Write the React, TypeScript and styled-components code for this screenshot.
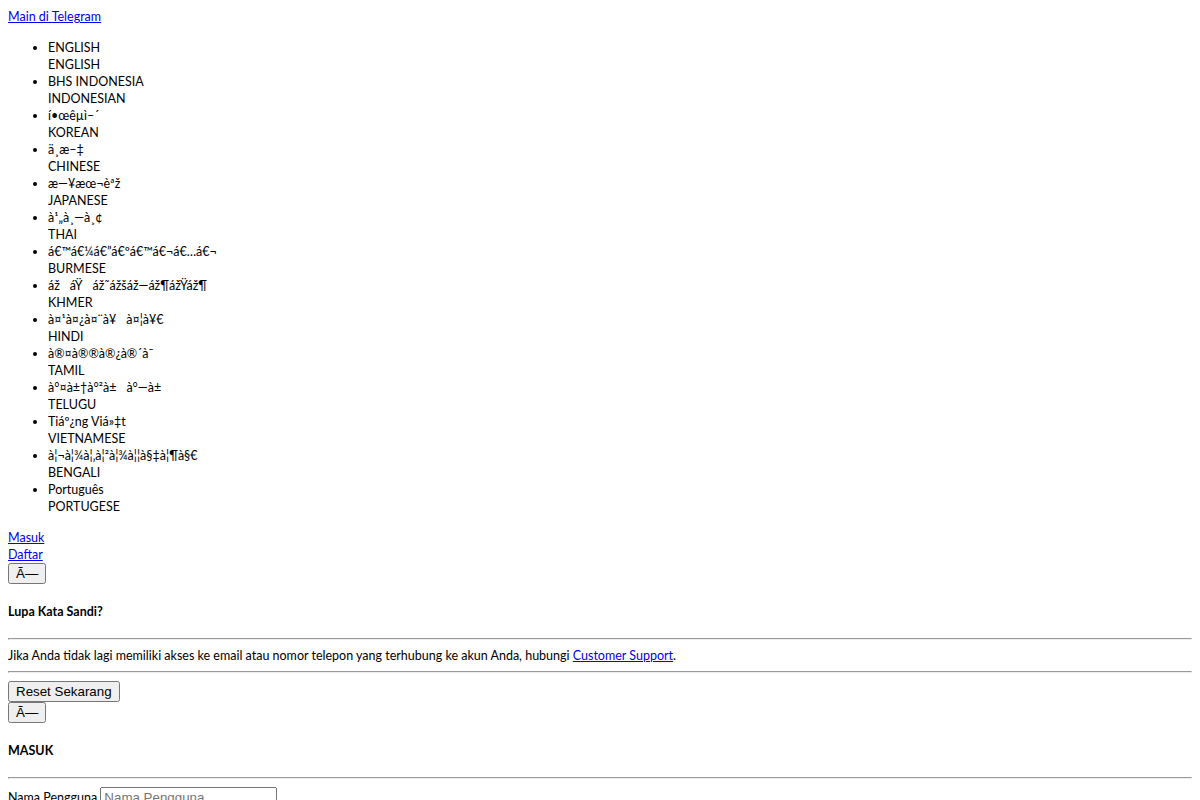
import React from "react";
import styled, { createGlobalStyle } from "styled-components";

const GlobalStyle = createGlobalStyle`
  body {
    margin: 8px;
    font-family: Lato, "Liberation Sans", Arial, sans-serif;
    font-size: 12.5px;
    line-height: 17px;
    color: #000;
    background: #fff;
  }
`;

const CP1252: Record<number, number> = {
  0x80: 0x20ac, 0x82: 0x201a, 0x83: 0x0192, 0x84: 0x201e, 0x85: 0x2026,
  0x86: 0x2020, 0x87: 0x2021, 0x88: 0x02c6, 0x89: 0x2030, 0x8a: 0x0160,
  0x8b: 0x2039, 0x8c: 0x0152, 0x8e: 0x017d, 0x91: 0x2018, 0x92: 0x2019,
  0x93: 0x201c, 0x94: 0x201d, 0x95: 0x2022, 0x96: 0x2013, 0x97: 0x2014,
  0x98: 0x02dc, 0x99: 0x2122, 0x9a: 0x0161, 0x9b: 0x203a, 0x9c: 0x0153,
  0x9e: 0x017e, 0x9f: 0x0178,
};

// The page was decoded as windows-1252: rebuild that text from the original strings.
function mojibake(s: string): string {
  const bytes = new TextEncoder().encode(s);
  let out = "";
  bytes.forEach((b) => {
    out += String.fromCharCode(CP1252[b] ?? b);
  });
  return out;
}

const LANGUAGES: [string, string][] = [
  ["ENGLISH", "ENGLISH"],
  ["BHS INDONESIA", "INDONESIAN"],
  [mojibake("한국어"), "KOREAN"],
  [mojibake("中文"), "CHINESE"],
  [mojibake("日本語"), "JAPANESE"],
  [mojibake("ไทย"), "THAI"],
  [mojibake("မြန်မာစာ"), "BURMESE"],
  [mojibake("ខេមរភាសា"), "KHMER"],
  [mojibake("हिन्दी"), "HINDI"],
  [mojibake("தமிழ்"), "TAMIL"],
  [mojibake("తెలుగు"), "TELUGU"],
  [mojibake("Tiếng Việt"), "VIETNAMESE"],
  [mojibake("বাংলাদেশী"), "BENGALI"],
  ["Português", "PORTUGESE"],
];

const CLOSE = mojibake("×");

const Page = styled.div`
  display: block;
`;

const Link = styled.a`
  color: #0000ee;
  text-decoration: underline;
  cursor: pointer;
`;

const LinkRow = styled.div`
  line-height: 17px;
`;

const LangList = styled.ul`
  margin: 14px 0;
  padding-left: 40px;
  list-style: disc;
`;

const LangItem = styled.li`
  line-height: 17px;
`;

const LangLine = styled.div`
  white-space: nowrap;
`;

const Modal = styled.div`
  display: block;
`;

const CloseButton = styled.button`
  font-family: "Liberation Sans", Arial, sans-serif;
  font-size: 13.3333px;
  display: inline-block;
`;

const ActionButton = styled.button`
  font-family: "Liberation Sans", Arial, sans-serif;
  font-size: 13.3333px;
`;

const ButtonRow = styled.div`
  line-height: normal;
`;

const Title = styled.h4`
  font-size: 12.5px;
  font-weight: bold;
  line-height: 17px;
  margin: 19px 0 18px;
`;

const Rule = styled.hr`
  margin: 8px 0;
`;

const Message = styled.div`
  line-height: 15px;
`;

const Field = styled.div`
  line-height: 17px;
`;

const FieldLabel = styled.label`
  font-size: 12.5px;
`;

const TextInput = styled.input`
  box-sizing: border-box;
  width: 177px;
  font-family: "Liberation Sans", Arial, sans-serif;
  font-size: 13.3333px;
`;

export default function App() {
  return (
    <Page>
      <GlobalStyle />
      <LinkRow>
        <Link href="#">Main di Telegram</Link>
      </LinkRow>
      <LangList>
        {LANGUAGES.map(([native, english]) => (
          <LangItem key={english}>
            <LangLine>{native}</LangLine>
            <LangLine>{english}</LangLine>
          </LangItem>
        ))}
      </LangList>
      <LinkRow>
        <Link href="#">Masuk</Link>
      </LinkRow>
      <LinkRow>
        <Link href="#">Daftar</Link>
      </LinkRow>
      <Modal>
        <ButtonRow>
          <CloseButton type="button">{CLOSE}</CloseButton>
        </ButtonRow>
        <Title>Lupa Kata Sandi?</Title>
        <Rule />
        <Message>
          Jika Anda tidak lagi memiliki akses ke email atau nomor telepon yang
          terhubung ke akun Anda, hubungi <Link href="#">Customer Support</Link>.
        </Message>
        <Rule />
        <ButtonRow>
          <ActionButton type="button">Reset Sekarang</ActionButton>
        </ButtonRow>
      </Modal>
      <Modal>
        <ButtonRow>
          <CloseButton type="button">{CLOSE}</CloseButton>
        </ButtonRow>
        <Title>MASUK</Title>
        <Rule />
        <Field>
          <FieldLabel htmlFor="username">Nama Pengguna</FieldLabel>{" "}
          <TextInput id="username" type="text" placeholder="Nama Pengguna" />
        </Field>
      </Modal>
    </Page>
  );
}
